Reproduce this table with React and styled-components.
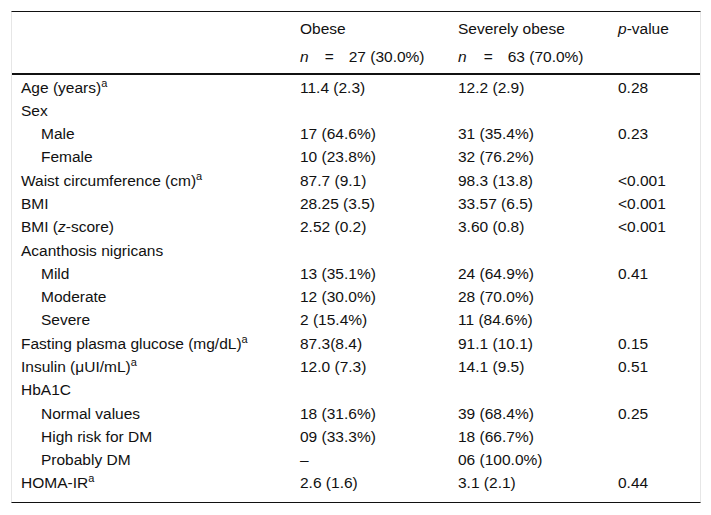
import React from "react";
import styled, { createGlobalStyle } from "styled-components";

const GlobalStyle = createGlobalStyle`
  html, body {
    margin: 0;
    padding: 0;
    background: #fff;
  }
  body {
    font-family: "Liberation Sans", Arial, Helvetica, sans-serif;
    color: #111;
  }
`;

// rows of the table body
const rows = [
  { label: "Age (years)", sup: true, obese: "11.4 (2.3)", severe: "12.2 (2.9)", p: "0.28" },
  { label: "Sex" },
  { label: "Male", sub: true, obese: "17 (64.6%)", severe: "31 (35.4%)", p: "0.23" },
  { label: "Female", sub: true, obese: "10 (23.8%)", severe: "32 (76.2%)" },
  { label: "Waist circumference (cm)", sup: true, obese: "87.7 (9.1)", severe: "98.3 (13.8)", p: "<0.001" },
  { label: "BMI", obese: "28.25 (3.5)", severe: "33.57 (6.5)", p: "<0.001" },
  { label: "bmiz", obese: "2.52 (0.2)", severe: "3.60 (0.8)", p: "<0.001" },
  { label: "Acanthosis nigricans" },
  { label: "Mild", sub: true, obese: "13 (35.1%)", severe: "24 (64.9%)", p: "0.41" },
  { label: "Moderate", sub: true, obese: "12 (30.0%)", severe: "28 (70.0%)" },
  { label: "Severe", sub: true, obese: "2 (15.4%)", severe: "11 (84.6%)" },
  { label: "Fasting plasma glucose (mg/dL)", sup: true, obese: "87.3(8.4)", severe: "91.1 (10.1)", p: "0.15" },
  { label: "Insulin (μUI/mL)", sup: true, obese: "12.0 (7.3)", severe: "14.1 (9.5)", p: "0.51" },
  { label: "HbA1C" },
  { label: "Normal values", sub: true, obese: "18 (31.6%)", severe: "39 (68.4%)", p: "0.25" },
  { label: "High risk for DM", sub: true, obese: "09 (33.3%)", severe: "18 (66.7%)" },
  { label: "Probably DM", sub: true, obese: "–", severe: "06 (100.0%)" },
  { label: "HOMA-IR", sup: true, obese: "2.6 (1.6)", severe: "3.1 (2.1)", p: "0.44" },
];

const Frame = styled.div`
  box-sizing: border-box;
  width: 690px;
  margin: 11px 0 0 11px;
  border-top: 1px solid #111;
  border-bottom: 1px solid #111;
  border-left: 1px solid #e6e6e6;
  border-right: 1px solid #e6e6e6;
`;

const Table = styled.table`
  width: 100%;
  table-layout: fixed;
  border-collapse: collapse;
  font-size: 15.5px;
  line-height: 17px;
`;

const HeadCell = styled.th`
  text-align: left;
  font-weight: normal;
  padding: ${(p) => (p.$second ? "6.35px 9px 7.65px" : "8px 9px 5px")};
  border-bottom: ${(p) => (p.$second ? "2px solid #111" : "none")};
  white-space: nowrap;
`;

const Cell = styled.td`
  padding: 3.65px 9px ${(p) => (p.$last ? "10.25px" : "2.65px")};
  padding-left: ${(p) => (p.$sub ? "29px" : "9px")};
  white-space: nowrap;
  vertical-align: top;
`;

const Sup = styled.sup`
  font-size: 11px;
  line-height: 0;
  vertical-align: 6px;
`;

const Eq = styled.span`
  display: inline-block;
  margin: 0 15px 0 ${(p) => p.$left}px;
`;

const Count = ({ value, left }) => (
  <>
    <i>n</i>
    <Eq $left={left}>=</Eq>
    {value}
  </>
);

const Label = ({ row }) => {
  if (row.label === "bmiz")
    return (
      <>
        BMI (<i>z</i>-score)
      </>
    );
  return (
    <>
      {row.label}
      {row.sup && <Sup>a</Sup>}
    </>
  );
};

export default function App() {
  return (
    <>
      <GlobalStyle />
      <Frame>
        <Table>
          <colgroup>
            <col style={{ width: 279 }} />
            <col style={{ width: 158 }} />
            <col style={{ width: 160 }} />
            <col style={{ width: 91 }} />
          </colgroup>
          <thead>
            <tr>
              <HeadCell />
              <HeadCell>Obese</HeadCell>
              <HeadCell>Severely obese</HeadCell>
              <HeadCell>
                <i>p</i>-value
              </HeadCell>
            </tr>
            <tr>
              <HeadCell $second />
              <HeadCell $second>
                <Count value="27 (30.0%)" left={16} />
              </HeadCell>
              <HeadCell $second>
                <Count value="63 (70.0%)" left={17} />
              </HeadCell>
              <HeadCell $second />
            </tr>
          </thead>
          <tbody>
            {rows.map((row, i) => {
              const last = i === rows.length - 1;
              return (
                <tr key={i}>
                  <Cell $sub={row.sub} $last={last}>
                    <Label row={row} />
                  </Cell>
                  <Cell $last={last}>{row.obese}</Cell>
                  <Cell $last={last}>{row.severe}</Cell>
                  <Cell $last={last}>{row.p}</Cell>
                </tr>
              );
            })}
          </tbody>
        </Table>
      </Frame>
    </>
  );
}
